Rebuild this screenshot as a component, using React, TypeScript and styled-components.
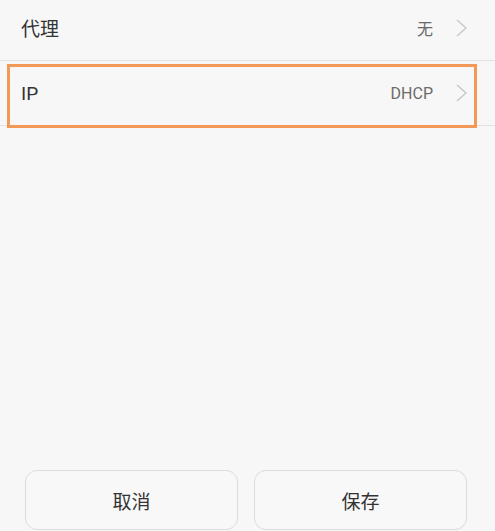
import styled, { createGlobalStyle } from "styled-components";

const GlobalStyle = createGlobalStyle`
  html, body {
    margin: 0;
    padding: 0;
    background: #f7f7f7;
  }
  body {
    font-family: Roboto, "Noto Sans CJK SC", "Noto Sans", sans-serif;
  }
`;

const Page = styled.div`
  min-height: 531px;
  display: flex;
  flex-direction: column;
  background: #f7f7f7;
  box-sizing: border-box;
  padding-bottom: 1px;
`;

const Row = styled.div<{ $height: number; $shift?: number }>`
  position: relative;
  height: ${(p) => p.$height}px;
  display: flex;
  align-items: center;
  padding: 0 28px 0 21px;
  padding-bottom: ${(p) => p.$shift ?? 0}px;
  box-sizing: border-box;
  border-bottom: 1px solid #e2e2e2;
`;

const Label = styled.span`
  flex: 1;
  font-size: 19px;
  color: #333;
`;

const Value = styled.span`
  font-size: 16px;
  color: #6a6a6a;
  margin-right: 23px;
`;

const Highlight = styled.div`
  position: absolute;
  left: 7px;
  right: 18px;
  top: 3px;
  bottom: -3px;
  border: 3px solid #f29a55;
  pointer-events: none;
`;

const Spacer = styled.div`
  flex: 1;
`;

const ButtonBar = styled.div`
  display: flex;
  gap: 16px;
  padding: 0 28px 0 25px;
`;

const Button = styled.button`
  flex: 1;
  height: 60px;
  border: 1px solid #dcdcdc;
  border-radius: 12px;
  background: #f8f8f8;
  font-family: Roboto, "Noto Sans CJK SC", sans-serif;
  font-size: 19px;
  color: #333;
  padding: 0;
`;

const Chevron = () => (
  <svg width="11" height="18" viewBox="0 0 11 18">
    <polyline
      points="1,1 10,9 1,17"
      fill="none"
      stroke="#c6c6c6"
      strokeWidth="1.3"
    />
  </svg>
);

export default function App() {
  return (
    <Page>
      <GlobalStyle />
      <Row $height={61} $shift={5}>
        <Label>代理</Label>
        <Value>无</Value>
        <Chevron />
      </Row>
      <Row $height={65}>
        <Label>IP</Label>
        <Value>DHCP</Value>
        <Chevron />
        <Highlight />
      </Row>
      <Spacer />
      <ButtonBar>
        <Button>取消</Button>
        <Button>保存</Button>
      </ButtonBar>
    </Page>
  );
}
